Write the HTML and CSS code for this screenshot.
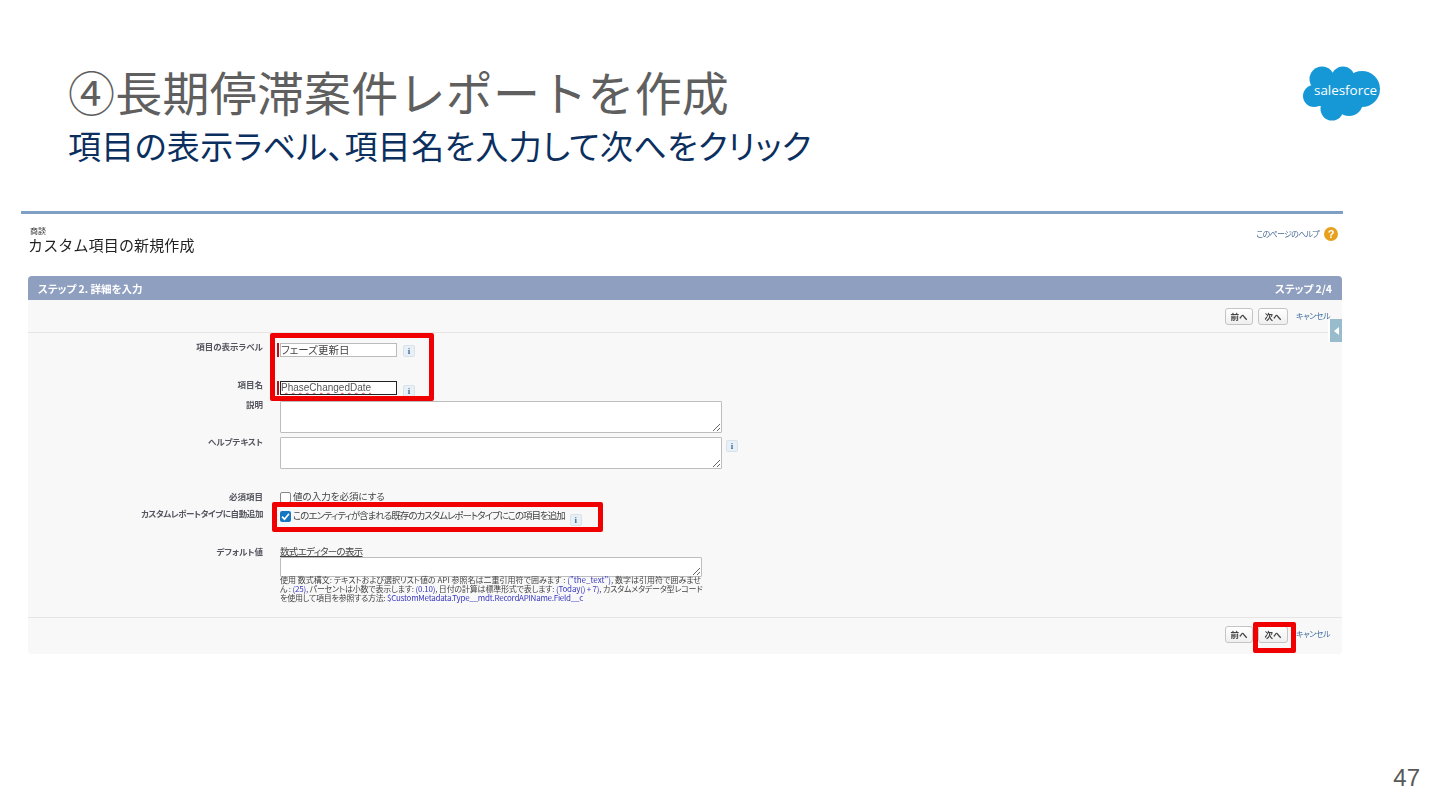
FILE: index.html
```html
<!DOCTYPE html>
<html lang="ja">
<head>
<meta charset="utf-8">
<title>長期停滞案件レポートを作成</title>
<link rel="stylesheet" href="styles.css">
</head>
<body>
<div class="slide">
  <header class="slide-head">
    <div class="slide-titles">
      <h1 class="slide-title">④長期停滞案件レポートを作成</h1>
      <p class="slide-sub">項目の表示ラベル、項目名を入力して次へをクリック</p>
    </div>
    <div class="logo">
      <svg class="logo-cloud" width="78" height="55" viewBox="0 0 78 55">
        <g fill="#1798d6">
          <circle cx="19" cy="13" r="12.5"/>
          <circle cx="40" cy="12" r="11.5"/>
          <circle cx="59" cy="23" r="18"/>
          <circle cx="11" cy="30" r="11"/>
          <circle cx="29" cy="43" r="11.5"/>
          <circle cx="46" cy="36" r="14"/>
          <rect x="14" y="10" width="40" height="30"/>
        </g>
      </svg>
      <span class="logo-text">salesforce</span>
    </div>
  </header>

  <main class="shot">
    <div class="shot-rule"></div>
    <div class="page-head">
      <div>
        <div class="page-crumb">商談</div>
        <div class="page-title">カスタム項目の新規作成</div>
      </div>
      <div class="page-help">
        <span class="help-link">このページのヘルプ</span>
        <span class="help-icon">?</span>
      </div>
    </div>

    <section class="panel">
      <div class="panel-head">
        <span>ステップ 2. 詳細を入力</span>
        <span>ステップ 2/4</span>
      </div>
      <div class="panel-bar panel-bar-top">
        <button class="btn">前へ</button>
        <button class="btn btn-next">次へ</button>
        <span class="cancel">キャンセル</span>
        <span class="side-tab"><span class="side-arrow"></span></span>
      </div>
      <div class="form">
        <div class="row row-label">
          <div class="label">項目の表示ラベル</div>
          <div class="field">
            <span class="req"></span><span class="input">フェーズ更新日</span><span class="info">i</span>
          </div>
        </div>
        <div class="row row-name">
          <div class="label">項目名</div>
          <div class="field">
            <span class="req"></span><span class="input input-focus">PhaseChangedDate</span><span class="info info-name">i</span>
          </div>
        </div>
        <div class="row row-desc">
          <div class="label">説明</div>
          <div class="field"><textarea class="textarea"></textarea></div>
        </div>
        <div class="row row-help">
          <div class="label">ヘルプテキスト</div>
          <div class="field"><textarea class="textarea"></textarea><span class="info info-top">i</span></div>
        </div>
        <div class="row row-required">
          <div class="label">必須項目</div>
          <div class="field check-field"><span class="check"></span><span>値の入力を必須にする</span></div>
        </div>
        <div class="row row-auto">
          <div class="label">カスタムレポートタイプに自動追加</div>
          <div class="field check-field">
            <span class="check check-on">
              <svg width="11" height="11" viewBox="0 0 11 11"><path d="M2 5.6 4.5 8.2 9 2.8" fill="none" stroke="#fff" stroke-width="1.7"/></svg>
            </span>
            <span>このエンティティが含まれる既存のカスタムレポートタイプにこの項目を追加</span>
            <span class="info info-low">i</span>
          </div>
        </div>
        <div class="row row-default">
          <div class="label">デフォルト値</div>
          <div class="field-stack">
            <div class="formula-link">数式エディターの表示</div>
            <textarea class="textarea textarea-small"></textarea>
            <p class="hint">
              <span class="hint-line">使用 数式構文: テキストおよび選択リスト値の API 参照名は二重引用符で囲みます : <span class="blue">("the_text")</span>, 数字は引用符で囲みませ</span>
              <span class="hint-line hint-line-2">ん : <span class="blue">(25)</span>, パーセントは小数で表示します: <span class="blue">(0.10)</span>, 日付の計算は標準形式で表します: <span class="blue">(Today() + 7)</span>, カスタムメタデータ型レコード</span>
              <span class="hint-line hint-line-3">を使用して項目を参照する方法: <span class="blue">$CustomMetadata.Type__mdt.RecordAPIName.Field__c</span></span>
            </p>
          </div>
        </div>
      </div>
      <div class="panel-bar panel-bar-bottom">
        <button class="btn">前へ</button>
        <button class="btn btn-next">次へ</button>
        <span class="cancel">キャンセル</span>
      </div>
    </section>
  </main>

  <footer class="slide-foot">47</footer>

  <div class="mark mark-fields"></div>
  <div class="mark mark-auto"></div>
  <div class="mark mark-next"></div>
</div>
</body>
</html>
```
FILE: styles.css
```css
* { box-sizing: border-box; }
html, body { margin: 0; padding: 0; background: #fff; }
body { font-family: "Noto Sans CJK JP", "Liberation Sans", sans-serif; }

.slide {
  position: relative;
  width: 1440px;
  height: 810px;
  overflow: hidden;
  display: flex;
  flex-direction: column;
  background: #fff;
}

/* slide header */
.slide-head {
  height: 211px;
  flex: none;
  display: flex;
  justify-content: space-between;
  align-items: flex-start;
  padding: 63px 60px 0 68px;
}
.slide-title {
  margin: 0;
  font-size: 47px;
  line-height: 56px;
  font-weight: 400;
  letter-spacing: 0.22px;
  color: #5f5f5f;
}
.slide-sub {
  margin: 6px 0 0;
  font-size: 33px;
  line-height: 40px;
  color: #0b2f5f;
  font-weight: 400;
  letter-spacing: 0.35px;
  font-feature-settings: "palt";
}
.logo {
  position: relative;
  width: 78px;
  height: 55px;
  margin-top: 3px;
  margin-right: -1px;
}
.logo-cloud { display: block; }
.logo-text {
  position: absolute;
  left: 11px;
  top: 14px;
  font-family: "Open Sans", sans-serif;
  font-size: 13.4px;
  line-height: 20px;
  color: #fff;
}

/* captured screen */
.shot {
  flex: none;
  width: 1322px;
  margin-left: 21px;
  filter: blur(0.35px);
  font-feature-settings: "palt";
}
.shot-rule { height: 3px; background: #7f9fc4; }
.page-head {
  display: flex;
  justify-content: space-between;
  align-items: flex-start;
  height: 62px;
  padding: 12px 5px 0 7px;
}
.page-crumb { font-size: 8px; line-height: 10px; color: #333; padding-left: 2px; }
.page-title {
  font-size: 15px;
  line-height: 20px;
  color: #222;
  margin-top: -1px;
  letter-spacing: 0.15px;
  font-feature-settings: normal;
}
.page-help { display: flex; align-items: center; gap: 5px; margin-top: 1px; }
.help-link { font-size: 8px; line-height: 14px; color: #4a6a94; letter-spacing: -0.7px; }
.help-icon {
  width: 14px;
  height: 14px;
  border-radius: 50%;
  background: #e8a11f;
  color: #fff;
  font: bold 11px/14px "Liberation Sans", sans-serif;
  text-align: center;
}

.panel {
  margin-left: 7px;
  width: 1314px;
  height: 378px;
  display: flex;
  flex-direction: column;
  background: #f8f8f8;
  border-radius: 4px;
}
.panel-head {
  flex: none;
  height: 24px;
  padding: 0 10px;
  display: flex;
  justify-content: space-between;
  align-items: center;
  background: #8f9fc0;
  border-radius: 4px 4px 0 0;
  color: #fff;
  font-size: 10.5px;
  font-weight: 700;
}
.panel-bar {
  position: relative;
  display: flex;
  justify-content: flex-end;
  align-items: flex-start;
  padding-right: 13px;
  flex: none;
}
.panel-bar-top { height: 33px; padding-top: 8px; border-bottom: 1px solid #e6e6e6; }
.panel-bar-bottom { height: 37px; padding-top: 8px; border-top: 1px solid #e6e6e6; margin-top: auto; }
.btn {
  width: 28px;
  height: 17px;
  padding: 0;
  border: 1px solid #c4c4c4;
  border-radius: 3px;
  background: linear-gradient(#fff, #efefef);
  font: 700 8.5px/15px "Noto Sans CJK JP", sans-serif;
  color: #444;
}
.btn-next { width: 30px; margin-left: 5px; }
.cancel {
  margin-left: 8px;
  font-size: 8px;
  line-height: 16px;
  color: #3f6da0;
  letter-spacing: -0.4px;
  width: 33px;
  white-space: nowrap;
}
.side-tab {
  position: absolute;
  right: 0;
  top: 19px;
  width: 14px;
  height: 23px;
  border-left: 2px solid #fff;
  background: #98bccb;
  display: flex;
  align-items: center;
  justify-content: center;
}
.side-arrow {
  border-right: 5px solid #fff;
  border-top: 4px solid transparent;
  border-bottom: 4px solid transparent;
}

/* form */
.form { padding-top: 10px; }
.row {
  display: grid;
  grid-template-columns: 235px 1fr;
  column-gap: 17px;
}
.row-name { margin-top: 24px; }
.row-desc { margin-top: 4px; }
.row-help { margin-top: 4px; }
.row-required { margin-top: 23px; }
.row-auto { margin-top: 5px; }
.row-default { margin-top: 20px; }
.label {
  margin-top: -4px;
  text-align: right;
  font-size: 8.5px;
  line-height: 14px;
  font-weight: 700;
  color: #55555f;
  white-space: nowrap;
}
.row-help .label { margin-top: -3px; }
.row-required .label { margin-top: -3px; }
.row-default .label { margin-top: -2px; }
.row-auto .label { margin-top: -5px; letter-spacing: -0.4px; }
.field { display: flex; align-items: flex-start; min-height: 14px; }
.req { flex: none; width: 2px; height: 14px; margin-left: -3px; margin-right: 1px; background: #b3131d; }
.input {
  width: 117px;
  height: 14px;
  border: 1px solid #bbb;
  background: #fff;
  font-size: 10.5px;
  line-height: 12px;
  color: #444;
  white-space: nowrap;
  overflow: hidden;
}
.input-focus {
  border: 1.5px solid #222;
  color: #555;
  font-family: "Liberation Sans", sans-serif;
  font-size: 10px;
  text-decoration: underline wavy #d05050 1px;
}
.info {
  flex: none;
  width: 12px;
  height: 12px;
  margin: 2px 0 0 6px;
  border: 1px solid #d8e2ea;
  background: #e8f0f6;
  border-radius: 2px;
  font: bold 9px/10px "Liberation Serif", serif;
  text-align: center;
  color: #3a6ea5;
}
.info-name { margin-top: 4px; }
.info-top { margin: 3px 0 0 4px; }
.info-low { margin: 3px 0 0 3px; }
.textarea {
  display: block;
  width: 442px;
  height: 32px;
  padding: 0;
  margin: 0;
  border: 1px solid #bdbdbd;
  background: #fff;
  border-radius: 1px;
  outline: 0;
}
.textarea-small { width: 422px; height: 20px; }
.check-field { font-size: 9.5px; line-height: 12px; color: #444; gap: 2px; }
.check {
  width: 11px;
  height: 11px;
  flex: none;
  border: 1px solid #888;
  border-radius: 2px;
  background: #fff;
}
.check-on { border: 0; background: #1676c2; display: flex; }
.check-field > span:nth-child(2) { white-space: nowrap; margin-top: -2px; }
.row-auto .check-field > span:nth-child(2) { letter-spacing: -1px; }
.field-stack { min-width: 0; }
.formula-link {
  font-size: 9.5px;
  line-height: 11px;
  color: #444;
  letter-spacing: -0.7px;
  text-decoration: underline;
}
.hint {
  margin: -2px 0 0;
  width: 430px;
  font-size: 8px;
  line-height: 9px;
  color: #444;
  white-space: nowrap;
}
.hint-line { display: block; }
.hint-line-2 { letter-spacing: -0.2px; }
.hint-line-3 { letter-spacing: -0.25px; }
.blue { color: #3a3ac0; }

/* slide footer */
.slide-foot {
  margin-top: auto;
  padding: 0 20px 18px 0;
  text-align: right;
  font: 24px/28px "Liberation Sans", sans-serif;
  color: #595959;
}

/* red call-outs over the capture */
.mark {
  position: absolute;
  border: 5px solid #f00000;
  border-radius: 2px;
}
.mark-fields { left: 270px; top: 333px; width: 164px; height: 68px; }
.mark-auto { left: 272px; top: 502px; width: 331px; height: 30px; }
.mark-next { left: 1253px; top: 622px; width: 43px; height: 31px; }
```
